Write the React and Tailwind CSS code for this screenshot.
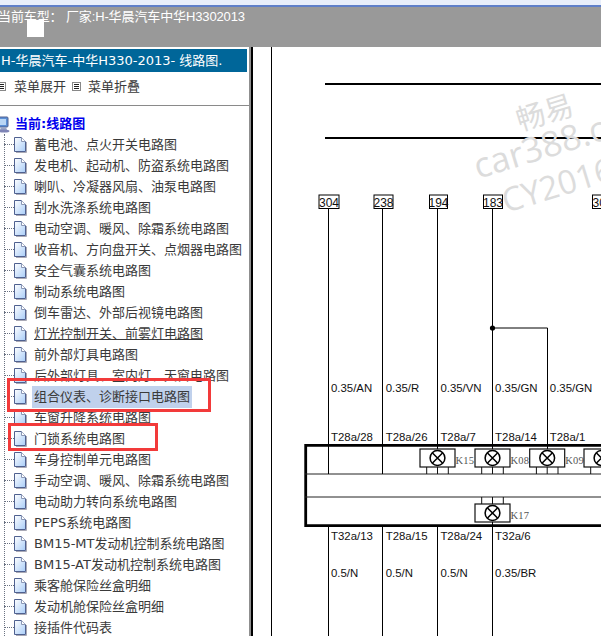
import React from 'react';

const menuItems = [
  '蓄电池、点火开关电路图',
  '发电机、起动机、防盗系统电路图',
  '喇叭、冷凝器风扇、油泵电路图',
  '刮水洗涤系统电路图',
  '电动空调、暖风、除霜系统电路图',
  '收音机、方向盘开关、点烟器电路图',
  '安全气囊系统电路图',
  '制动系统电路图',
  '倒车雷达、外部后视镜电路图',
  '灯光控制开关、前雾灯电路图',
  '前外部灯具电路图',
  '后外部灯具、室内灯、天窗电路图',
  '组合仪表、诊断接口电路图',
  '车窗升降系统电路图',
  '门锁系统电路图',
  '车身控制单元电路图',
  '手动空调、暖风、除霜系统电路图',
  '电动助力转向系统电路图',
  'PEPS系统电路图',
  'BM15-MT发动机控制系统电路图',
  'BM15-AT发动机控制系统电路图',
  '乘客舱保险丝盒明细',
  '发动机舱保险丝盒明细',
  '接插件代码表',
];

const DocIcon = () => (
  <svg width="13" height="16" viewBox="0 0 13 16" className="shrink-0">
    <defs>
      <linearGradient id="docFill" x1="0" y1="0" x2="1" y2="1">
        <stop offset="0" stopColor="#ffffff" />
        <stop offset="1" stopColor="#a9cdf8" />
      </linearGradient>
    </defs>
    <path d="M2 15.5h10.5V5" fill="none" stroke="#a9a9b5" strokeWidth="1" />
    <path d="M.5.5H7.5L11.5 4.5V14.5H.5Z" fill="url(#docFill)" stroke="#4f6190" strokeWidth="1" />
    <path d="M7.5.5V4.5H11.5" fill="#fff" stroke="#8a97b5" strokeWidth="1" />
  </svg>
);

const ExpandIcon = () => (
  <svg width="9" height="9" viewBox="0 0 9 9" className="shrink-0">
    <rect x=".5" y=".5" width="8" height="8" fill="#fff" stroke="#888" />
    <path d="M2 2.5h5M2 4.5h5M2 6.5h5" stroke="#222" strokeWidth="1" />
  </svg>
);

const ComputerIcon = () => (
  <svg width="10" height="17" viewBox="0 0 10 17" className="shrink-0">
    <rect x="-3" y="1" width="11" height="10" rx="1" fill="#5b8fd6" stroke="#50608f" />
    <rect x="-1" y="3" width="7" height="6" fill="#b9d6f5" />
    <path d="M1 11h5l1 3H0Z" fill="#9aa5c4" />
    <ellipse cx="4" cy="15" rx="5.5" ry="1.6" fill="#7d83b5" />
  </svg>
);

const MenuRow = ({ text, selected, underline }) => (
  <div className="flex items-center h-[21px] relative">
    <div className="w-[10px] ml-[4px] border-t border-dotted border-gray-500" />
    <DocIcon />
    <span
      className={`ml-[5px] px-[2px] whitespace-nowrap text-[13px] leading-[22px] text-[#3a3a3a] ${selected ? 'bg-[#c0d1ec]' : ''} ${underline ? 'underline' : ''}`}
    >
      {text}
    </span>
  </div>
);

// connector block with lamp symbol, x is the left edge of the 35px box
const Lamp = ({ x, y, label, legsUp }) => {
  const cx = x + 17.5;
  const cy = y + 9;
  return (
    <g>
      <rect x={x} y={y} width="35" height="18" fill="#fff" stroke="#111" strokeWidth="1.2" />
      <circle cx={cx} cy={cy} r="7.4" fill="#fff" stroke="#000" strokeWidth="1.5" />
      <path d={`M${cx - 5} ${cy - 5}L${cx + 5} ${cy + 5}M${cx + 5} ${cy - 5}L${cx - 5} ${cy + 5}`} stroke="#000" strokeWidth="1.5" />
      {[6.7, 17.5, 28.3].map((d) => (
        <line key={d} x1={x + d} x2={x + d} y1={legsUp ? y - 7 : y + 18} y2={legsUp ? y : y + 25} stroke="#111" strokeWidth="1" />
      ))}
      {label && (
        <text x={x + 35.5} y={y + 15} fontFamily="'Liberation Serif', serif" fontSize="10.5" fill="#555" letterSpacing=".2">
          {label}
        </text>
      )}
    </g>
  );
};

const wires = [328.5, 382.5, 437.5, 492.5, 547.5];
const tags = [
  { x: 319, w: 20, text: '304' },
  { x: 374, w: 19, text: '238' },
  { x: 429.5, w: 18, text: '194' },
  { x: 483.5, w: 19, text: '183' },
  { x: 592.5, w: 20, text: '304' },
];

const Label = ({ x, y, children }) => (
  <text x={x} y={y} fontFamily="'Liberation Sans', Arial, sans-serif" fontSize="11.4" fill="#111">
    {children}
  </text>
);

// coordinates inside the svg are page coordinates, the viewBox shifts them
const Diagram = () => (
  <svg width="348" height="589" viewBox="253 47 348 589" className="block">
    <line x1="271.5" x2="271.5" y1="47" y2="636" stroke="#000" strokeWidth="1" />
    <line x1="325" x2="601" y1="84" y2="84" stroke="#000" strokeWidth="2" />
    <line x1="325" x2="601" y1="138" y2="138" stroke="#000" strokeWidth="2" />

    {/* watermark */}
    <g fill="#dcdcdc">
      <text transform="translate(520 131) rotate(-17)" fontFamily="'Noto Sans CJK SC', sans-serif" fontSize="29">畅易</text>
      <text transform="translate(478 179) rotate(-17)" fontFamily="'Open Sans', sans-serif" fontSize="35">car388.com</text>
      <text transform="translate(506 213) rotate(-17)" fontFamily="'Open Sans', sans-serif" fontSize="33">CY2016</text>
    </g>

    {wires.slice(0, 4).map((x) => (
      <line key={x} x1={x} x2={x} y1="208" y2="445" stroke="#000" strokeWidth="1" />
    ))}
    <path d="M492.5 328H547.5V445" fill="none" stroke="#000" strokeWidth="1" />
    <circle cx="492.5" cy="328" r="2.6" fill="#000" />

    {tags.map((t) => (
      <g key={t.x}>
        <rect x={t.x} y="195" width={t.w} height="13.5" fill="#fff" stroke="#000" strokeWidth="1" />
        <text x={t.x + t.w / 2} y="206.5" textAnchor="middle" fontFamily="'Liberation Sans', sans-serif" fontSize="12" fill="#111">
          {t.text}
        </text>
      </g>
    ))}

    {['0.35/AN', '0.35/R', '0.35/VN', '0.35/GN', '0.35/GN'].map((s, i) => (
      <Label key={i} x={331 + i * 54.7} y="392">{s}</Label>
    ))}
    {['T28a/28', 'T28a/26', 'T28a/7', 'T28a/14', 'T28a/1'].map((s, i) => (
      <Label key={i} x={331 + i * 54.7} y="441">{s}</Label>
    ))}

    {/* connector frame */}
    <path d="M601 445.3H305.7V525.7H601" fill="#fff" stroke="#000" strokeWidth="2.8" />
    <line x1="305" x2="601" y1="474" y2="474" stroke="#222" strokeWidth="1" />
    <line x1="305" x2="601" y1="497" y2="497" stroke="#222" strokeWidth="1" />
    <line x1="328.5" x2="328.5" y1="445" y2="474" stroke="#000" strokeWidth="1" />
    <line x1="382.5" x2="382.5" y1="445" y2="474" stroke="#000" strokeWidth="1" />
    {[437.5, 492.5, 547.5, 601.5].map((x) => (
      <line key={x} x1={x} x2={x} y1="445" y2="449" stroke="#000" strokeWidth="1" />
    ))}
    <Lamp x={420} y={449} label="K15" />
    <Lamp x={475} y={449} label="K08" />
    <Lamp x={529.7} y={449} label="K09" />
    <Lamp x={584} y={449} />
    <Lamp x={475} y={504} label="K17" legsUp />

    {wires.slice(0, 4).map((x) => (
      <line key={x} x1={x} x2={x} y1="527" y2="636" stroke="#000" strokeWidth="1" />
    ))}
    <line x1="492.5" x2="492.5" y1="522" y2="527" stroke="#000" strokeWidth="1" />
    {['T32a/13', 'T28a/15', 'T28a/24', 'T32a/6'].map((s, i) => (
      <Label key={i} x={331 + i * 54.7} y="540">{s}</Label>
    ))}
    {['0.5/N', '0.5/N', '0.5/N', '0.35/BR'].map((s, i) => (
      <Label key={i} x={331 + i * 54.7} y="577">{s}</Label>
    ))}
  </svg>
);

export default function App() {
  return (
    <div className="relative w-[601px] h-[636px] overflow-hidden bg-white font-['DejaVu_Sans','Noto_Sans_CJK_SC',sans-serif]">
      {/* window title edge */}
      <div className="h-[5px] bg-[#e8eefa]" />
      <div className="h-[2px] bg-[#5f7fc9]" />

      {/* top bar */}
      <div className="h-[40px] bg-[#999999] text-white text-[13px] leading-[17px] pt-[1px] -indent-[2px] tracking-[-0.12px] whitespace-nowrap font-['Liberation_Sans','Noto_Sans_CJK_SC',sans-serif]">
        当前车型： 厂家:H-华晨汽车中华H3302013
      </div>
      <div className="absolute left-[27px] top-[20px] w-[17px] h-[17px] bg-white" />

      <div className="flex h-[589px]">
        {/* left tree */}
        <aside className="w-[249px] shrink-0 overflow-hidden pt-[2px]">
          <div className="w-[247px] h-[23px] bg-[#006699] text-white text-[13px] leading-[23px] pl-[1px] whitespace-nowrap">
            H-华晨汽车-中华H330-2013- 线路图.
          </div>
          <div className="flex items-center h-[29px] text-[13px] text-[#3a3a3a]">
            <div className="w-[6px] overflow-hidden flex justify-end"><ExpandIcon /></div>
            <span className="ml-[8px]">菜单展开</span>
            <div className="ml-[6px]"><ExpandIcon /></div>
            <span className="ml-[7px]">菜单折叠</span>
          </div>
          <div className="h-px mt-[4px] bg-[#8a8a8a]" />
          <div className="flex items-center h-[18px] mt-[9px]">
            <ComputerIcon />
            <span className="ml-[5px] text-[13px] font-bold text-[#0000ee]">当前:线路图</span>
          </div>
          <div className="relative mt-[1px]">
            <div className="absolute left-[4px] top-0 bottom-0 border-l border-dotted border-gray-500" />
            {menuItems.map((item, i) => (
              <MenuRow key={item} text={item} selected={i === 12} underline={i === 9} />
            ))}
          </div>
        </aside>

        {/* splitter */}
        <div className="w-[2px] shrink-0 bg-[#8f8f8f]" />
        <div className="w-[2px] shrink-0 bg-black" />

        <main className="flex-1 min-w-0">
          <Diagram />
        </main>
      </div>

      {/* red annotation boxes */}
      <div className="absolute left-[7px] top-[378px] w-[204px] h-[34px] border-[3px] border-[#f23a3a]" />
      <div className="absolute left-[8px] top-[423px] w-[150px] h-[28px] border-[3px] border-[#f23a3a]" />
    </div>
  );
}
